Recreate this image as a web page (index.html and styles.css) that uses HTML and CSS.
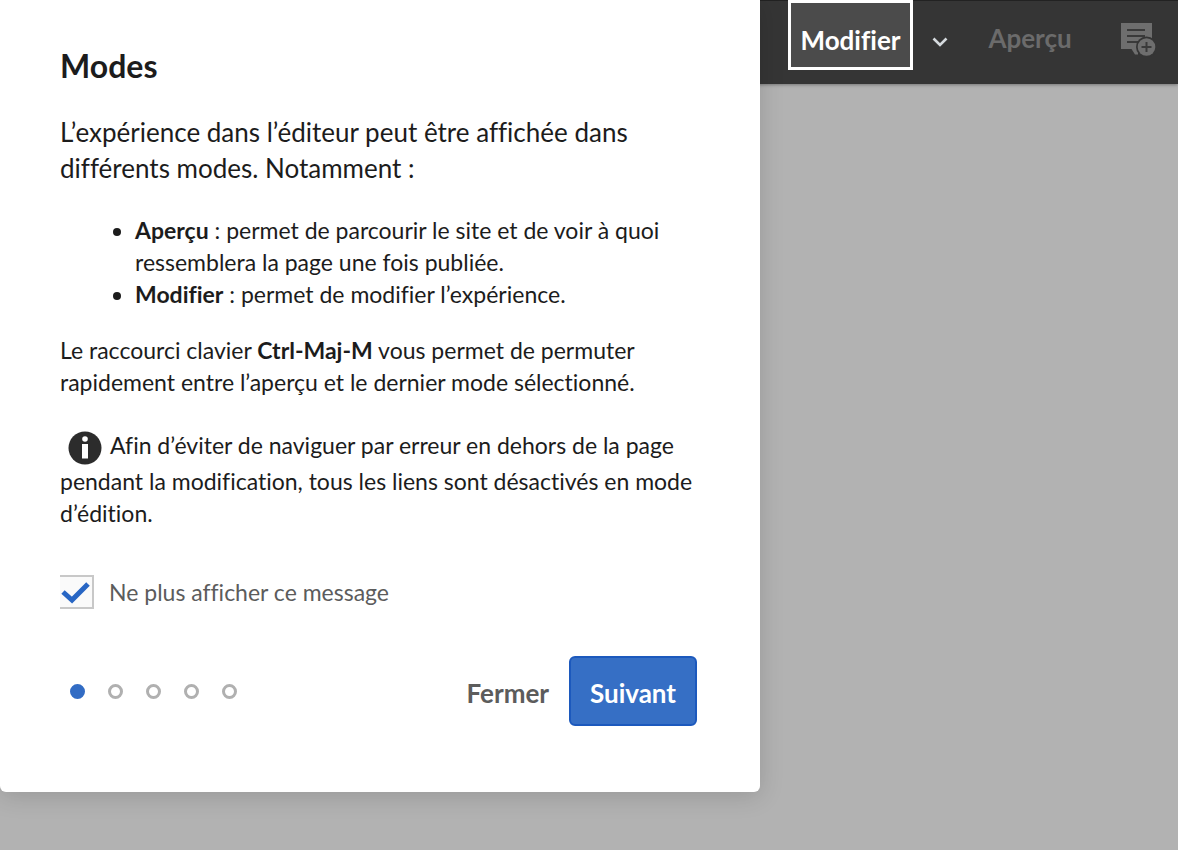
FILE: index.html
```html
<!DOCTYPE html>
<html lang="fr">
<head>
<meta charset="utf-8">
<meta name="viewport" content="width=device-width, initial-scale=1">
<title>Modes</title>
<link rel="stylesheet" href="styles.css">
</head>
<body>
<header class="toolbar">
  <button class="mode mode-active" type="button">Modifier</button>
  <button class="icon-button chevron" type="button" aria-label="Choisir un mode">
    <svg width="18" height="12" viewBox="0 0 18 12"><path d="M2.500 2.500 9 9l6.500-6.500" fill="none" stroke="currentColor" stroke-width="2.600"/></svg>
  </button>
  <button class="mode mode-preview" type="button">Aperçu</button>
  <button class="icon-button annotate" type="button" aria-label="Annoter">
    <svg width="36" height="34" viewBox="0 0 36 34">
      <path d="M1 0h31v20l-14 5.500v6h-3L11.500 26H1z" fill="currentColor"/>
      <path d="M7 7h18M7 13h18M7 19h11" stroke="#3a3a3a" stroke-width="2"/>
      <circle cx="26.500" cy="24" r="10.500" fill="#353535"/>
      <circle cx="26.500" cy="24" r="8.800" fill="currentColor"/>
      <path d="M26.500 19v10M21.500 24h10" stroke="#3a3a3a" stroke-width="2"/>
    </svg>
  </button>
</header>
<section class="dialog" role="dialog" aria-labelledby="dialog-title">
  <h1 class="title" id="dialog-title">Modes</h1>
  <p class="intro">L’expérience dans l’éditeur peut être affichée dans différents modes. Notamment :</p>
  <ul class="modes">
    <li><strong>Aperçu</strong> : permet de parcourir le site et de voir à quoi ressemblera la page une fois publiée.</li>
    <li><strong>Modifier</strong> : permet de modifier l’expérience.</li>
  </ul>
  <p class="text">Le raccourci clavier <strong>Ctrl-Maj-M</strong> vous permet de permuter rapidement entre l’aperçu et le dernier mode sélectionné.</p>
  <p class="text note"><svg class="info" width="34" height="34" viewBox="0 0 34 34" aria-hidden="true"><circle cx="17" cy="17" r="16.500" fill="#2c2c2c"/><circle cx="17" cy="8" r="2.800" fill="#fff"/><path d="M14 13h6v14.500h-6z" fill="#fff"/></svg>Afin d’éviter de naviguer par erreur en dehors de la page pendant la modification, tous les liens sont désactivés en mode d’édition.</p>
  <label class="dismiss"><input class="checkbox" type="checkbox" checked>Ne plus afficher ce message</label>
  <footer class="footer">
    <div class="steps" aria-label="Étape 1 sur 5">
      <span class="step step-current"></span><span class="step"></span><span class="step"></span><span class="step"></span><span class="step"></span>
    </div>
    <button class="close" type="button">Fermer</button>
    <button class="next" type="button">Suivant</button>
  </footer>
</section>
</body>
</html>
```
FILE: styles.css
```css
* { box-sizing: border-box; }

body {
  margin: 0;
  min-height: 100vh;
  background: #b2b2b2;
  color: #1c1c1c;
  font-family: Lato, "Open Sans", sans-serif;
  font-variant-ligatures: none;
}

button {
  margin: 0;
  padding: 0;
  border: 0;
  background: none;
  font: inherit;
  font-weight: 700;
}

.toolbar {
  display: flex;
  justify-content: flex-end;
  align-items: center;
  height: 84px;
  padding-right: 22px;
  background: #353535;
  box-shadow: inset 0 1px #222, 0 1px 3px #777;
}

.mode { font-size: 26px; }

.mode-active {
  align-self: flex-start;
  width: 125px;
  height: 70px;
  padding-top: 10px;
  border: 3px solid #fff;
  background: #4b4b4b;
  color: #fff;
}

.mode-preview {
  width: 84px;
  padding-bottom: 8px;
  color: #6b6b6b;
}

.icon-button { display: flex; }

.chevron {
  margin: 0 39px 0 18px;
  color: #d5dade;
}

.annotate {
  margin-left: 48px;
  padding-bottom: 4px;
  color: #6e6e6e;
}

.dialog {
  position: absolute;
  top: 0;
  left: 0;
  width: 760px;
  max-width: 100%;
  padding: 46px 63px 66px 60px;
  background: #fff;
  border-radius: 0 0 6px 6px;
  box-shadow: 0 4px 24px rgba(0, 0, 0, 0.15);
}

.title {
  margin: 0 0 28px;
  font-size: 32px;
  line-height: 40px;
}

.intro {
  margin: 0 0 28px;
  font-size: 26px;
  line-height: 36px;
}

.modes,
.text {
  margin: 0;
  font-size: 23px;
  line-height: 32px;
}

.modes {
  margin-bottom: 24px;
  padding-left: 75px;
}

.note { margin: 31px 0 46px; }

.info {
  margin: 0 8px;
  vertical-align: middle;
}

.dismiss {
  display: flex;
  align-items: center;
  gap: 15px;
  color: #5c5c5c;
  font-size: 23px;
  line-height: 34px;
}

.checkbox {
  appearance: none;
  width: 34px;
  height: 34px;
  margin: 0;
  border: 2px solid #c8c8c8;
  border-left: 0;
  background: #fafafa;
}

.checkbox:checked {
  background: #fafafa url("data:image/svg+xml,%3Csvg xmlns='http://www.w3.org/2000/svg' viewBox='0 0 32 30'%3E%3Cpath d='M3 15l9 8L28 7' fill='none' stroke='%232866c4' stroke-width='5'/%3E%3C/svg%3E") center / 100% 100%;
}

.footer {
  display: flex;
  align-items: center;
  margin-top: 47px;
}

.steps {
  display: flex;
  gap: 23px;
  margin: 0 auto 0 10px;
}

.step {
  width: 15px;
  height: 15px;
  border: 3px solid #b0b0b0;
  border-radius: 50%;
}

.step-current {
  border-color: #326cc4;
  background: #326cc4;
}

.close,
.next {
  height: 70px;
  padding-top: 4px;
  font-size: 26px;
}

.close {
  margin-right: 20px;
  color: #5c5c5c;
}

.next {
  width: 128px;
  border: 2px solid #1c59bd;
  border-radius: 6px;
  background: #366fc5;
  color: #fff;
}
```
